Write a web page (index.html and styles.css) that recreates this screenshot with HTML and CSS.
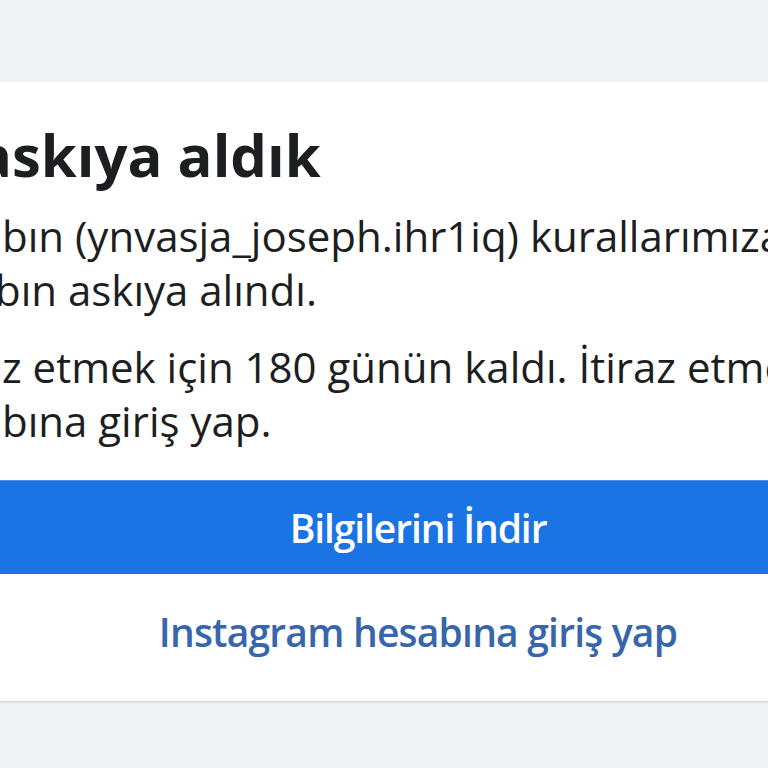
FILE: index.html
```html
<!DOCTYPE html>
<html lang="tr">
<head>
<meta charset="utf-8">
<title>Hesabını askıya aldık</title>
<link rel="stylesheet" href="styles.css">
</head>
<body>
<main class="card">
  <h1 class="title">askıya aldık</h1>
  <p class="para">
    <span class="line">bın (ynvasja_joseph.ihr1iq) kurallarımıza uymadığı için</span>
    <span class="line line-cut">bın askıya alındı.</span>
  </p>
  <p class="para">
    <span class="line">z etmek için 180 günün kaldı. İtiraz etmek için Instagram</span>
    <span class="line">bına giriş yap.</span>
  </p>
  <button class="primary">Bilgilerini İndir</button>
  <a class="link" href="#">Instagram hesabına giriş yap</a>
</main>
</body>
</html>
```
FILE: styles.css
```css
html, body {
  margin: 0;
  padding: 0;
}
body {
  background: #f0f2f5;
  overflow: hidden;
  width: 768px;
  height: 768px;
  font-family: "Open Sans", "Noto Sans", sans-serif;
  color: #1c1e21;
}
.card {
  box-sizing: border-box;
  width: 1100px;
  margin: 82px 0 0 -132px;
  background: #ffffff;
  border-bottom: 1px solid #dadde1;
  box-shadow: 0 1px 2px rgba(0, 0, 0, 0.08);
  padding: 36px 0 42px 0;
  display: flex;
  flex-direction: column;
}
.title {
  margin: 0 0 17px 0;
  padding-left: 109px;
  font-size: 58px;
  line-height: 74px;
  font-weight: 700;
  white-space: nowrap;
}
.para {
  margin: 0 0 23px 0;
  padding-left: 134px;
  font-size: 42px;
  line-height: 54px;
  white-space: nowrap;
}
.para + .para {
  margin-bottom: 32px;
}
.line {
  display: block;
}
.line-cut {
  margin-left: -7px;
}
.primary {
  display: block;
  width: 100%;
  height: 94px;
  border: none;
  border-top: 1px solid #4f8fe0;
  background: #1b74e4;
  color: #ffffff;
  font-family: inherit;
  font-size: 39px;
  font-weight: 600;
  letter-spacing: -1.1px;
  padding: 0;
  margin: 0 0 31px 0;
}
.link {
  display: block;
  text-align: center;
  font-size: 39px;
  line-height: 54px;
  font-weight: 600;
  letter-spacing: -0.8px;
  color: #3866ac;
  text-decoration: none;
}
```
